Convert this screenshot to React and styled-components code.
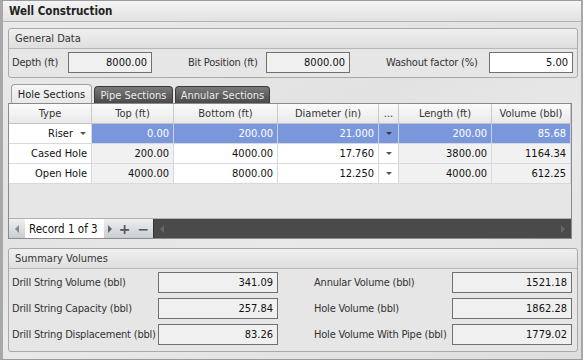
import React from 'react';
import styled, { createGlobalStyle } from 'styled-components';

const Global = createGlobalStyle`
  html, body { margin: 0; padding: 0; }
  body {
    width: 583px;
    height: 360px;
    overflow: hidden;
    background: #d4d4d4;
    font-family: "DejaVu Sans Condensed", "Liberation Sans", sans-serif;
    font-size: 11px;
    color: #1e1e1e;
  }
`;

const Window = styled.div`
  box-sizing: border-box;
  width: 583px;
  height: 360px;
  border-top: 1px solid #9a9a9a;
  border-left: 3px solid #a8a8a8;
  border-right: 2px solid #a8a8a8;
  border-bottom: 1px solid #9a9a9a;
  background: linear-gradient(160deg, #ebebeb 0%, #e2e2e2 40%, #e9e9e9 60%, #dedede 100%);
  display: flex;
  flex-direction: column;
`;

const TitleBar = styled.div`
  height: 20px;
  display: flex;
  align-items: center;
  padding-left: 6px;
  font-weight: bold;
  font-size: 11.5px;
  color: #222;
  background: linear-gradient(#f4f4f4, #e2e2e2);
  border-bottom: 1px solid #b4b4b4;
`;

const Body = styled.div`
  padding: 6px 3px 0 5px;
  display: flex;
  flex-direction: column;
`;

const Group = styled.div`
  box-sizing: border-box;
  height: ${p => p.$h}px;
  border: 1px solid #a9a9a9;
  border-radius: 3px;
  background: #e6e6e6;
  margin-top: ${p => p.$mt || 0}px;
`;

const GroupHeader = styled.div`
  height: 20px;
  box-sizing: border-box;
  display: flex;
  align-items: center;
  padding-left: 6px;
  color: #333;
  background: linear-gradient(#efefef, #dfdfdf);
  border-bottom: 1px solid #b8b8b8;
  border-radius: 3px 3px 0 0;
`;

const DataRow = styled.div`
  display: flex;
  align-items: center;
  height: 27px;
  padding: 0 0 0 3px;
`;

const Label = styled.span`
  color: #333;
  width: ${p => (p.$w ? `${p.$w}px` : 'auto')};
  white-space: nowrap;
  letter-spacing: -0.2px;
`;

const Field = styled.div`
  box-sizing: border-box;
  width: ${p => p.$w}px;
  height: 21px;
  border: 1px solid #707070;
  background: ${p => (p.$white ? '#fff' : '#f0f0f0')};
  text-align: right;
  padding-right: 4px;
  line-height: 19px;
  color: #111;
`;

const Tabs = styled.div`
  display: flex;
  gap: 2px;
  margin: 6px 0 0 3px;
  height: 19px;
  align-items: flex-end;
`;

const Tab = styled.div`
  box-sizing: border-box;
  width: ${p => p.$w}px;
  height: ${p => (p.$active ? 19 : 17)}px;
  border: 1px solid ${p => (p.$active ? '#a0a0a0' : '#3a3a3a')};
  border-bottom: none;
  border-radius: 4px 4px 0 0;
  display: flex;
  align-items: center;
  justify-content: center;
  color: ${p => (p.$active ? '#222' : '#ececec')};
  background: ${p => (p.$active ? 'linear-gradient(#f6f6f6, #e8e8e8)' : 'linear-gradient(#7a7a7a, #4a4a4a)')};
`;

const Grid = styled.div`
  box-sizing: border-box;
  border: 1px solid #8a8a8a;
  background: #e6e6e6;
  height: 136px;
  display: flex;
  flex-direction: column;
  width: 564px;
`;

const cols = '83px 82px 104px 101px 20px 93px 79px';

const HeadRow = styled.div`
  box-sizing: border-box;
  display: grid;
  grid-template-columns: ${cols};
  height: 20px;
  background: linear-gradient(#fbfbfb, #e9e9e9);
  border-bottom: 1px solid #c4c4c4;
`;

const HeadCell = styled.div`
  display: flex;
  align-items: center;
  justify-content: center;
  border-right: 1px solid #c8c8c8;
  color: #333;
`;

const Row = styled.div`
  box-sizing: border-box;
  display: grid;
  grid-template-columns: ${cols};
  height: 20px;
  background: ${p => (p.$sel ? '#7b97dc' : '#fff')};
  border-bottom: 1px solid #d6d9e0;
`;

const Cell = styled.div`
  display: flex;
  align-items: center;
  justify-content: ${p => (p.$center ? 'center' : 'flex-end')};
  padding-right: ${p => (p.$center ? 0 : 4)}px;
  border-right: 1px solid ${p => (p.$sel ? '#c8d2ee' : '#d6d9e0')};
  color: ${p => (p.$sel ? '#fff' : '#111')};
  background: ${p => (p.$sel ? 'transparent' : p.$ro ? '#f1f1f1' : '#fff')};
  white-space: nowrap;
`;

const TypeCell = styled(Cell)`
  background: #fff;
  color: #111;
`;

const Spacer = styled.div`
  flex: 1;
`;

const Nav = styled.div`
  height: 19px;
  display: flex;
  align-items: stretch;
  border-top: 1px solid #b0b0b0;
`;

const NavButtons = styled.div`
  display: flex;
  align-items: center;
  background: linear-gradient(#eef0f2, #c8cdd3);
  padding: 0 ${p => p.$pad || 7}px;
  gap: 7px;
`;

const Glyph = styled.span`
  font-size: 14px;
  font-weight: bold;
  color: #555;
  line-height: 1;
  font-family: "DejaVu Sans", sans-serif;
`;

const RecordText = styled.div`
  background: #fff;
  padding: 0 6px 0 4px;
  display: flex;
  align-items: center;
  color: #111;
  font-size: 11.5px;
  white-space: nowrap;
`;

const ScrollBar = styled.div`
  flex: 1;
  background: #4a4a4a;
  border-left: 1px solid #333;
  display: flex;
  justify-content: space-between;
  align-items: center;
  padding: 0 6px 0 6px;
`;

const SummaryGrid = styled.div`
  display: grid;
  grid-template-columns: 146px 120px 36px 138px 120px;
  row-gap: 5px;
  align-items: center;
  padding: 3px 0 0 3px;
`;

const Tri = ({ dir = 'left', color = '#666', size = 4 }) => {
  const pts =
    dir === 'left'
      ? `${size},0 0,${size} ${size},${size * 2}`
      : dir === 'right'
      ? `0,0 ${size},${size} 0,${size * 2}`
      : `0,0 ${size * 2},0 ${size},${size}`;
  const w = dir === 'down' ? size * 2 : size;
  const h = dir === 'down' ? size : size * 2;
  return (
    <svg width={w} height={h} viewBox={`0 0 ${w} ${h}`} style={{ display: 'block' }}>
      <polygon points={pts} fill={color} />
    </svg>
  );
};

const Drop = styled.span`
  margin-left: 7px;
  margin-right: 1px;
  display: flex;
`;

const rows = [
  ['Riser', '0.00', '200.00', '21.000', '200.00', '85.68'],
  ['Cased Hole', '200.00', '4000.00', '17.760', '3800.00', '1164.34'],
  ['Open Hole', '4000.00', '8000.00', '12.250', '4000.00', '612.25'],
];

const summary = [
  ['Drill String Volume (bbl)', '341.09', 'Annular Volume (bbl)', '1521.18'],
  ['Drill String Capacity (bbl)', '257.84', 'Hole Volume (bbl)', '1862.28'],
  ['Drill String Displacement (bbl)', '83.26', 'Hole Volume With Pipe (bbl)', '1779.02'],
];

export default function App() {
  return (
    <>
      <Global />
      <Window>
        <TitleBar>Well Construction</TitleBar>
        <Body>
          <Group $h={50}>
            <GroupHeader>General Data</GroupHeader>
            <DataRow>
              <Label $w={56}>Depth (ft)</Label>
              <Field $w={84}>8000.00</Field>
              <Label $w={36} />
              <Label $w={78}>Bit Position (ft)</Label>
              <Field $w={84}>8000.00</Field>
              <Label $w={36} />
              <Label $w={103}>Washout factor (%)</Label>
              <Field $w={84} $white>5.00</Field>
            </DataRow>
          </Group>
          <Tabs>
            <Tab $active $w={81}>Hole Sections</Tab>
            <Tab $w={79}>Pipe Sections</Tab>
            <Tab $w={95}>Annular Sections</Tab>
          </Tabs>
          <Grid>
            <HeadRow>
              <HeadCell>Type</HeadCell>
              <HeadCell>Top (ft)</HeadCell>
              <HeadCell>Bottom (ft)</HeadCell>
              <HeadCell>Diameter (in)</HeadCell>
              <HeadCell>...</HeadCell>
              <HeadCell>Length (ft)</HeadCell>
              <HeadCell>Volume (bbl)</HeadCell>
            </HeadRow>
            {rows.map((r, i) => {
              const sel = i === 0;
              return (
                <Row key={r[0]} $sel={sel}>
                  <TypeCell>
                    {r[0]}
                    {sel && (
                      <Drop>
                        <Tri dir="down" color="#555" size={3} />
                      </Drop>
                    )}
                  </TypeCell>
                  <Cell $sel={sel} $ro>{r[1]}</Cell>
                  <Cell $sel={sel}>{r[2]}</Cell>
                  <Cell $sel={sel}>{r[3]}</Cell>
                  <Cell $sel={sel} $center>
                    <Tri dir="down" color={sel ? '#3a3a3a' : '#555'} size={3} />
                  </Cell>
                  <Cell $sel={sel} $ro>{r[4]}</Cell>
                  <Cell $sel={sel} $ro>{r[5]}</Cell>
                </Row>
              );
            })}
            <Spacer />
            <Nav>
              <NavButtons $pad={6}>
                <Tri dir="left" color="#8a8a8a" size={4} />
              </NavButtons>
              <RecordText>Record 1 of 3</RecordText>
              <NavButtons $pad={4}>
                <Tri dir="right" color="#666" size={4} />
                <Glyph>+</Glyph>
                <Glyph>−</Glyph>
              </NavButtons>
              <ScrollBar>
                <Tri dir="left" color="#666" size={4} />
                <Tri dir="right" color="#666" size={4} />
              </ScrollBar>
            </Nav>
          </Grid>
          <Group $h={104} $mt={9}>
            <GroupHeader>Summary Volumes</GroupHeader>
            <SummaryGrid>
              {summary.map(s => (
                <React.Fragment key={s[0]}>
                  <Label>{s[0]}</Label>
                  <Field $w={120}>{s[1]}</Field>
                  <span />
                  <Label>{s[2]}</Label>
                  <Field $w={120}>{s[3]}</Field>
                </React.Fragment>
              ))}
            </SummaryGrid>
          </Group>
        </Body>
      </Window>
    </>
  );
}
